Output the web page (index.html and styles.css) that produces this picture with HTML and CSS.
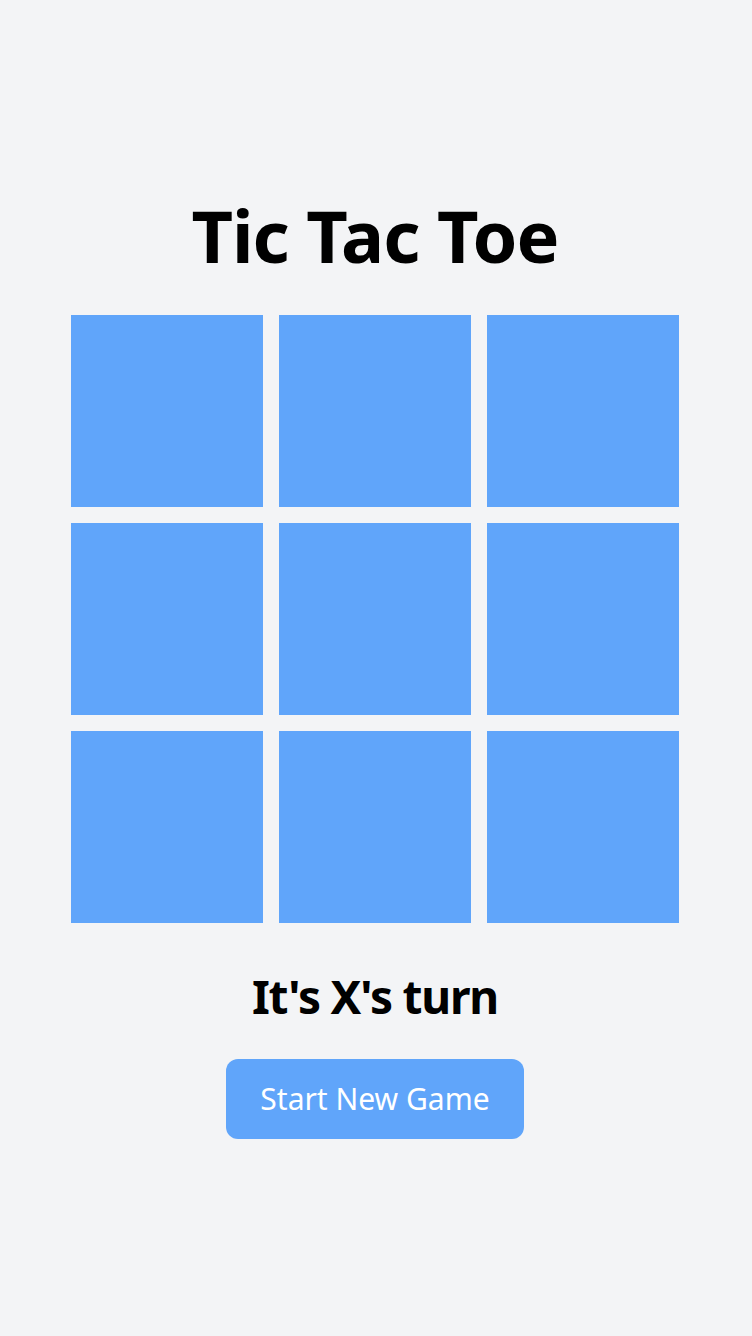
FILE: index.html
```html
<!DOCTYPE html>
<html lang="en">
<head>
<meta charset="utf-8">
<title>Tic Tac Toe</title>
<link rel="stylesheet" href="styles.css">
</head>
<body>
<main class="app">
  <h1 class="title">Tic Tac Toe</h1>
  <div class="board">
    <button class="cell"></button>
    <button class="cell"></button>
    <button class="cell"></button>
    <button class="cell"></button>
    <button class="cell"></button>
    <button class="cell"></button>
    <button class="cell"></button>
    <button class="cell"></button>
    <button class="cell"></button>
  </div>
  <p class="status">It's X's turn</p>
  <button class="reset">Start New Game</button>
</main>
</body>
</html>
```

FILE: styles.css
```css
html, body {
  margin: 0;
  padding: 0;
  background: #f3f4f6;
}
body {
  font-family: "Noto Sans", system-ui, sans-serif;
  color: #000;
}
.app {
  width: 750px;
  min-height: 1336px;
  padding-top: 2px;
  display: flex;
  flex-direction: column;
  align-items: center;
  justify-content: center;
  box-sizing: border-box;
}
.title {
  margin: 0 0 44px;
  font-size: 72px;
  line-height: 1;
  font-weight: 700;
  letter-spacing: -1px;
}
.board {
  display: grid;
  grid-template-columns: repeat(3, 192px);
  grid-template-rows: repeat(3, 192px);
  gap: 16px;
}
.cell {
  border: 0;
  padding: 0;
  margin: 0;
  background: #60a5fa;
}
.status {
  margin: 50px 0 40px;
  font-size: 46px;
  line-height: 1;
  font-weight: 700;
  letter-spacing: -1.2px;
}
.reset {
  border: 0;
  margin: 0;
  background: #60a5fa;
  color: #fff;
  font-family: inherit;
  font-size: 30px;
  line-height: 36px;
  padding: 22px 34px;
  border-radius: 12px;
}
```
